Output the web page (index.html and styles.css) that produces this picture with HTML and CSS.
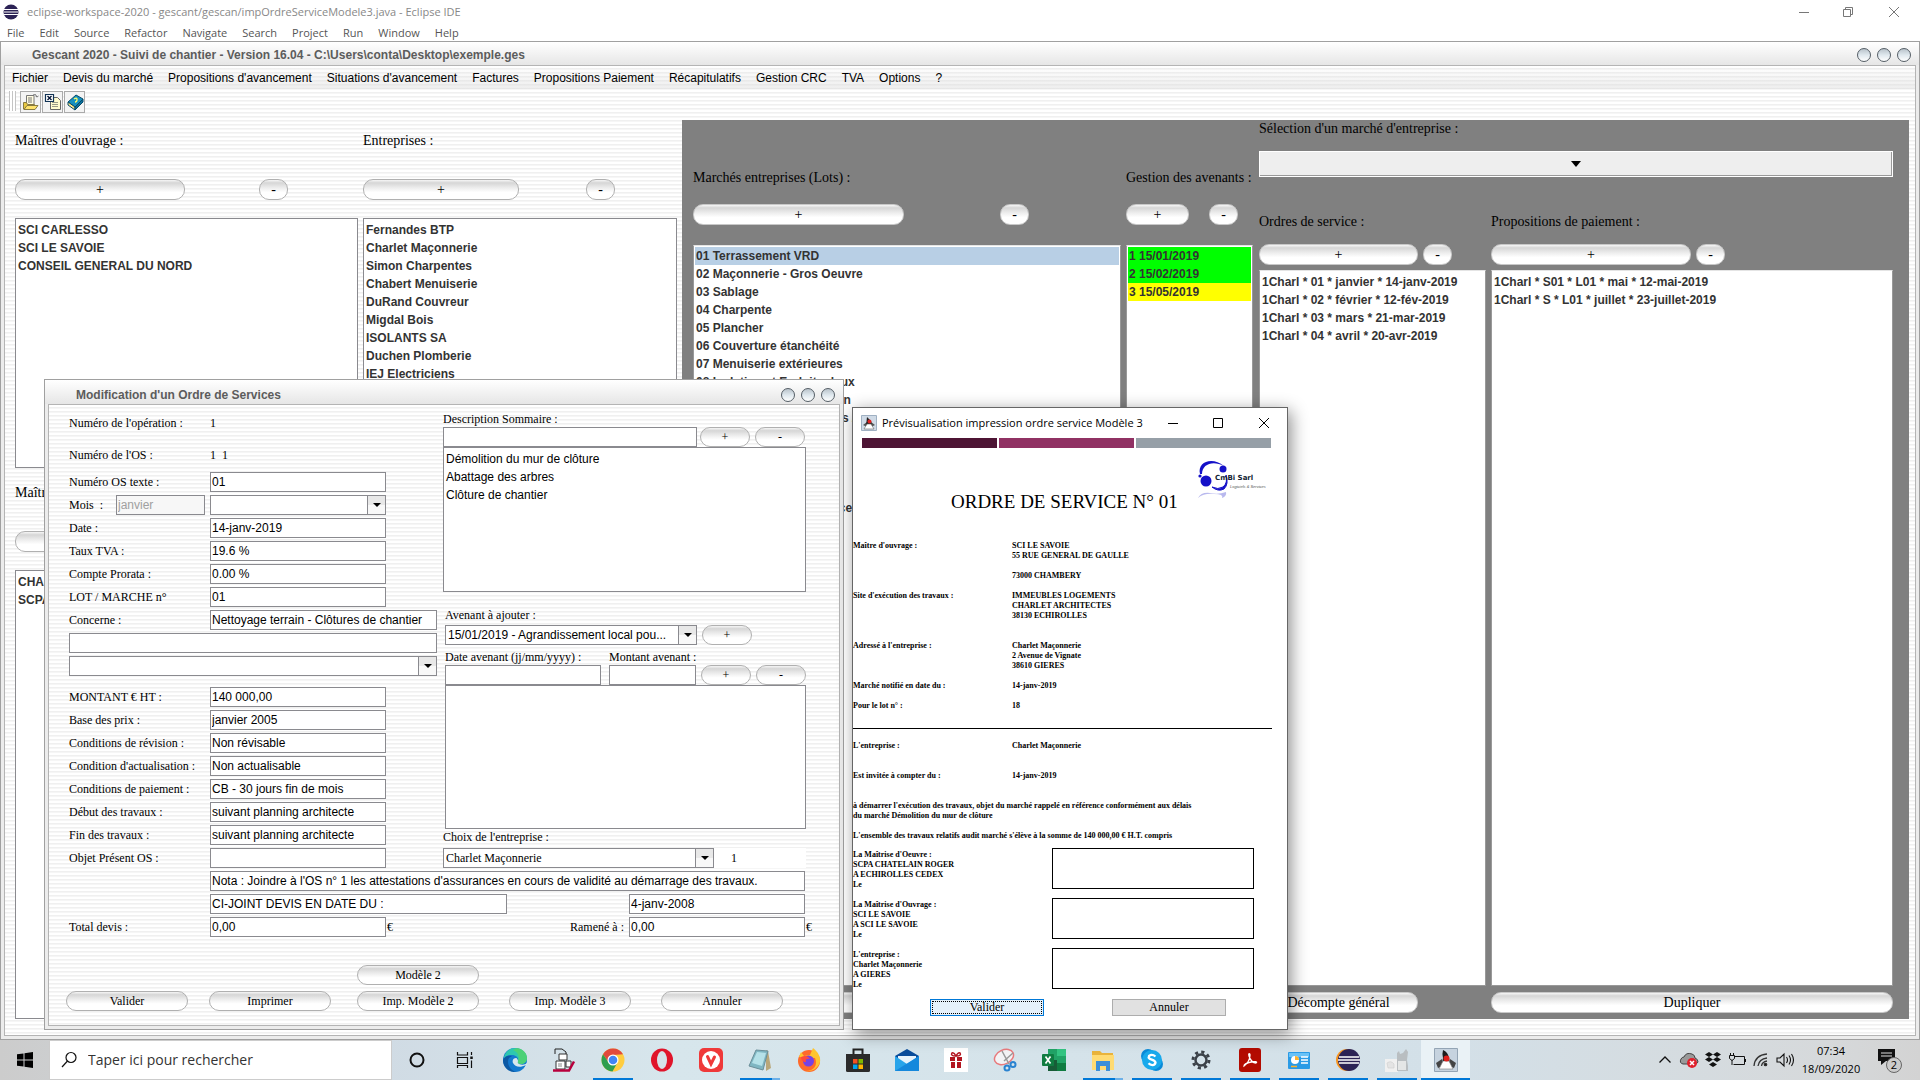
FILE: index.html
```html
<!DOCTYPE html>
<html lang="fr">
<head>
<meta charset="utf-8">
<title>Gescant 2020 - Suivi de chantier</title>
<link rel="stylesheet" href="styles.css">
</head>
<body>
<header class="ide">
  <div class="ide-title">
    <svg width="16" height="16" viewBox="0 0 16 16"><circle cx="8" cy="8" r="7.5" fill="#2c2255"/><path d="M1 5.500h14M1 8h14M1 10.500h14" stroke="#fff" stroke-width="1.200"/></svg>
    <span>eclipse-workspace-2020 - gescant/gescan/impOrdreServiceModele3.java - Eclipse IDE</span>
    <svg class="ide-controls" width="102" height="12" viewBox="0 0 102 12" fill="none" stroke="#777"><path d="M1 6.500h10M45.500 3.500h7v7h-7zM47.500 3.500v-2h7v7h-2M91 1l10 10M101 1L91 11"/></svg>
  </div>
  <nav class="ide-menu"><span>File</span><span>Edit</span><span>Source</span><span>Refactor</span><span>Navigate</span><span>Search</span><span>Project</span><span>Run</span><span>Window</span><span>Help</span></nav>
</header>

<main class="frame main-frame">
  <div class="frame-title"><span>Gescant 2020 - Suivi de chantier - Version 16.04 - C:\Users\conta\Desktop\exemple.ges</span><div class="orbs"><i></i><i></i><i></i></div></div>
  <div class="frame-body main-body">
    <nav class="menubar"><span>Fichier</span><span>Devis du marché</span><span>Propositions d'avancement</span><span>Situations d'avancement</span><span>Factures</span><span>Propositions Paiement</span><span>Récapitulatifs</span><span>Gestion CRC</span><span>TVA</span><span>Options</span><span>?</span></nav>
    <div class="toolbar">
      <span class="grip"></span>
      <button aria-label="Ouvrir"><svg width="18" height="18" viewBox="0 0 18 18"><path d="M4.500 11V2.500h7.500V11" fill="#fffbe0" stroke="#777"/><path d="M6 5h4M6 7h4M6 9h4" stroke="#777"/><path d="M1.500 16V9.500h3l1 2h7v4.500z" fill="#e8c840" stroke="#887a40"/><path d="M2 16.500l3-4h11l-3 4z" fill="#ffe36b" stroke="#887a40"/><path d="M11 2q3-2 4 2m0 0l-1.500-1m1.500 1l1.500-1" fill="none" stroke="#777"/></svg></button>
      <button aria-label="Exporter"><svg width="18" height="18" viewBox="0 0 18 18"><path d="M6.500 4.500h7l3 3v9h-10z" fill="#fffbd0" stroke="#666"/><path d="M8 9.500h6M8 11.500h6M8 13.500h6" stroke="#998"/><path d="M1.500 1.500h8v7h-8z" fill="#fff" stroke="#135" stroke-width="1.200"/><path d="M3.500 3l4 4M7.500 3l-4 4" stroke="#013" stroke-width="1.300"/></svg></button>
      <button aria-label="Aide"><svg width="18" height="18" viewBox="0 0 18 18"><path d="M2 9l8-7 7 4-8 8z" fill="#1590c0" stroke="#064a68"/><path d="M2 9v3l7 5v-3z" fill="#ffe88a" stroke="#064a68"/><path d="M9 14v3l8-8V6z" fill="#0b6f9b" stroke="#064a68"/><path d="M8 6q3-2 3 .5T9 9" stroke="#ff6" fill="none" stroke-width="1.300"/></svg></button>
    </div>
    <div class="workspace">
      <div class="stack">
        <section class="pane pane-top">
          <h2>Maîtres d'ouvrage :</h2>
          <div class="pair"><button class="pill w170">+</button><button class="pill w29 off74">-</button></div>
          <ul class="list"><li>SCI CARLESSO</li><li>SCI LE SAVOIE</li><li>CONSEIL GENERAL DU NORD</li></ul>
        </section>
        <section class="pane pane-bottom">
          <h2>Maîtres d'oeuvre :</h2>
          <div class="pair"><button class="pill w170">+</button><button class="pill w29 off74">-</button></div>
          <ul class="list"><li>CHARLET ARCHITECTES</li><li>SCPA CHATELAIN ROGER</li></ul>
        </section>
      </div>
      <section class="pane">
        <h2>Entreprises :</h2>
        <div class="pair"><button class="pill w156">+</button><button class="pill w29 off67">-</button></div>
        <ul class="list"><li>Fernandes BTP</li><li>Charlet Maçonnerie</li><li>Simon Charpentes</li><li>Chabert Menuiserie</li><li>DuRand Couvreur</li><li>Migdal Bois</li><li>ISOLANTS SA</li><li>Duchen Plomberie</li><li>IEJ Electriciens</li></ul>
      </section>
      <div class="contracts">
        <section class="lot">
          <h2>Marchés entreprises (Lots) :</h2>
          <div class="pair"><button class="pill w211">+</button><button class="pill w29 off96">-</button></div>
          <ul class="list"><li class="selected">01 Terrassement VRD</li><li>02 Maçonnerie - Gros Oeuvre</li><li>03 Sablage</li><li>04 Charpente</li><li>05 Plancher</li><li>06 Couverture étanchéité</li><li>07 Menuiserie extérieures</li><li>08 Isolation et Enduits deux</li><li>09 Menuiserie intérieure en</li><li>10 Carrelages Chapes sols /</li><li>11 Peinture</li><li>12 Electricité</li><li>13 Plomberie</li><li>14 Chauffage</li><li>15 Nettoyage de fin surface</li></ul>
          <button class="pill foot" aria-label="Situation"></button>
        </section>
        <section class="lot">
          <h2>Gestion des avenants :</h2>
          <div class="pair"><button class="pill w63">+</button><button class="pill w29 off20">-</button></div>
          <ul class="list"><li class="ok">1 15/01/2019</li><li class="ok">2 15/02/2019</li><li class="wait">3 15/05/2019</li></ul>
          <button class="pill foot" aria-label="Avenant"></button>
        </section>
        <div class="market">
          <h2><label for="market">Sélection d'un marché d'entreprise :</label></h2>
          <select id="market" class="market-select"><option></option></select>
          <div class="market-lists">
            <section class="orders">
              <h2>Ordres de service :</h2>
              <div class="pair"><button class="pill w159">+</button><button class="pill w29 off5">-</button></div>
              <ul class="list"><li>1Charl * 01 * janvier * 14-janv-2019</li><li>1Charl * 02 * février * 12-fév-2019</li><li>1Charl * 03 * mars * 21-mar-2019</li><li>1Charl * 04 * avril * 20-avr-2019</li></ul>
              <button class="pill foot w159">Décompte général</button>
            </section>
            <section class="orders">
              <h2>Propositions de paiement :</h2>
              <div class="pair"><button class="pill w200">+</button><button class="pill w29 off5">-</button></div>
              <ul class="list"><li>1Charl * S01 * L01 * mai * 12-mai-2019</li><li>1Charl * S * L01 * juillet * 23-juillet-2019</li></ul>
              <button class="pill foot">Dupliquer</button>
            </section>
          </div>
        </div>
      </div>
    </div>
  </div>
</main>

<form class="frame dialog" onsubmit="return false">
  <div class="frame-title"><span>Modification d'un Ordre de Services</span><div class="orbs"><i></i><i></i><i></i></div></div>
  <div class="frame-body dialog-body">
    <div class="cols">
      <div class="col-left">
        <div class="row"><span class="lab">Numéro de l'opération :</span><span>1</span></div>
        <div class="row row-os"><span class="lab">Numéro de l'OS :</span><span>1&nbsp; 1</span></div>
        <div class="row"><label class="lab" for="f1">Numéro OS texte :</label><input id="f1" class="w176" value="01"></div>
        <div class="row"><label class="lab-month" for="f2">Mois &nbsp;:</label><input id="f2" class="w89" value="janvier" disabled><select class="w176 month" aria-label="Mois"><option></option></select></div>
        <div class="row"><label class="lab" for="f3">Date :</label><input id="f3" class="w176" value="14-janv-2019"></div>
        <div class="row"><label class="lab" for="f4">Taux TVA :</label><input id="f4" class="w176" value="19.6 %"></div>
        <div class="row"><label class="lab" for="f5">Compte Prorata :</label><input id="f5" class="w176" value="0.00 %"></div>
        <div class="row"><label class="lab" for="f6">LOT / MARCHE n°</label><input id="f6" class="w176" value="01"></div>
        <div class="row"><label class="lab" for="f7">Concerne :</label><input id="f7" class="grow" value="Nettoyage terrain - Clôtures de chantier"></div>
        <div class="row"><input class="grow" aria-label="Concerne, suite"></div>
        <div class="row"><select class="grow" aria-label="Modèle de texte"><option></option></select></div>
        <div class="row row-amount"><label class="lab" for="g1">MONTANT € HT :</label><input id="g1" class="w176" value="140 000,00"></div>
        <div class="row"><label class="lab" for="g2">Base des prix :</label><input id="g2" class="w176" value="janvier 2005"></div>
        <div class="row"><label class="lab" for="g3">Conditions de révision :</label><input id="g3" class="w176" value="Non révisable"></div>
        <div class="row"><label class="lab" for="g4">Condition d'actualisation :</label><input id="g4" class="w176" value="Non actualisable"></div>
        <div class="row"><label class="lab" for="g5">Conditions de paiement :</label><input id="g5" class="w176" value="CB - 30 jours fin de mois"></div>
        <div class="row"><label class="lab" for="g6">Début des travaux :</label><input id="g6" class="w176" value="suivant planning architecte"></div>
        <div class="row"><label class="lab" for="g7">Fin des travaux :</label><input id="g7" class="w176" value="suivant planning architecte"></div>
        <div class="row"><label class="lab" for="g8">Objet Présent OS :</label><input id="g8" class="w176"></div>
      </div>
      <div class="col-right">
        <label class="cap" for="h1">Description Sommaire :</label>
        <div class="row"><input id="h1" class="w254"><button class="pill w50 gap3">+</button><button class="pill w50 gap5">-</button></div>
        <ul class="list plain"><li>Démolition du mur de clôture</li><li>Abattage des arbres</li><li>Clôture de chantier</li></ul>
        <label class="cap cap-add shift" for="h2">Avenant à ajouter :</label>
        <div class="row row-add shift"><select id="h2" class="w252"><option>15/01/2019 - Agrandissement local pou...</option></select><button class="pill w50 gap5">+</button></div>
        <div class="caps shift"><label class="cap w164" for="h3">Date avenant (jj/mm/yyyy) :</label><label class="cap" for="h4">Montant avenant :</label></div>
        <div class="row shift"><input id="h3" class="w156"><input id="h4" class="w87 gap8"><button class="pill w50 gap5">+</button><button class="pill w50 gap5">-</button></div>
        <ul class="list plain"></ul>
        <label class="cap" for="h5">Choix de l'entreprise :</label>
        <div class="row row-choice"><select id="h5" class="company"><option>Charlet Maçonnerie</option></select><span>1</span></div>
      </div>
    </div>
    <div class="lower">
      <div class="row indent"><input class="grow" aria-label="Nota" value="Nota : Joindre à l'OS n° 1 les attestations d'assurances en cours de validité au démarrage des travaux."></div>
      <div class="row indent"><input class="w297" aria-label="Devis" value="CI-JOINT DEVIS EN DATE DU :"><input class="w176 push" aria-label="Date du devis" value="4-janv-2008"></div>
      <div class="row"><label class="lab" for="t1">Total devis :</label><input id="t1" class="w176" value="0,00"><span class="euro">€</span><label class="push" for="t2">Ramené à :</label><input id="t2" class="w176 gap5" value="0,00"><span class="euro">€</span></div>
    </div>
    <div class="actions">
      <button class="pill third">Modèle 2</button>
      <button class="pill first">Valider</button><button class="pill">Imprimer</button><button class="pill">Imp. Modèle 2</button><button class="pill">Imp. Modèle 3</button><button class="pill">Annuler</button>
    </div>
  </div>
</form>

<section class="preview">
  <div class="preview-title">
    <svg width="16" height="16" viewBox="0 0 16 16"><path d="M.5.500h15v15H.5z" fill="#cfdae6" stroke="#9fb0c2"/><path d="M2 10l4-3v5zM14 10l-4-3v5z" fill="#555"/><path d="M6 2l4 4 1 5H5z" fill="#222"/><path d="M6 9h4l3 5H3z" fill="#fff" stroke="#666" stroke-width=".6"/><circle cx="8.500" cy="6.500" r="2" fill="#d22"/></svg>
    <span>Prévisualisation impression ordre service Modèle 3</span>
    <svg class="preview-controls" width="102" height="12" viewBox="0 0 102 12" fill="none" stroke="#000"><path d="M0 6.500h10M45.500 1.500h9v9h-9zM91 1l10 10M101 1L91 11"/></svg>
  </div>
  <div class="bars"><i class="plum"></i><i class="rose"></i><i class="slate"></i></div>
  <div class="sheet-head">
    <h1>ORDRE DE SERVICE N° 01</h1>
    <svg class="logo" width="70" height="40" viewBox="0 0 70 40"><path d="M2 14C-1 2 14-4 26 6C15 0 4 4 4 14z" fill="#1410c8"/><circle cx="25" cy="9" r="3.500" fill="#1410c8"/><circle cx="8" cy="21" r="5.500" fill="#1410c8"/><circle cx="2" cy="16" r="1.600" fill="#1410c8"/><path d="M28 15q2 8-3 12-5 3-11 0 6 5 12 2 5-5 2-14z" fill="#1410c8" stroke="#1410c8"/><path d="M0 38q3-6 12-5 8 2 16-1 1 4-4 6 2-4-8-4-10-1-16 4z" fill="#b9b9ee"/><text x="17" y="20" class="logo-name">CmBi Sarl</text><text x="32" y="28" class="logo-tag">Logiciels &amp; Services</text></svg>
  </div>
  <dl class="facts">
    <dt>Maître d'ouvrage :</dt><dd>SCI LE SAVOIE<br>55 RUE GENERAL DE GAULLE<br><br>73000 CHAMBERY</dd>
    <dt>Site d'exécution des travaux :</dt><dd class="wide">IMMEUBLES LOGEMENTS<br>CHARLET ARCHITECTES<br>38130 ECHIROLLES</dd>
    <dt>Adressé à l'entreprise :</dt><dd>Charlet Maçonnerie<br>2 Avenue de Vignate<br>38610 GIERES</dd>
    <dt>Marché notifié en date du :</dt><dd>14-janv-2019</dd>
    <dt>Pour le lot n° :</dt><dd>18</dd>
  </dl>
  <hr>
  <dl class="facts">
    <dt>L'entreprise :</dt><dd class="wide">Charlet Maçonnerie</dd>
    <dt>Est invitée à compter du :</dt><dd class="wide">14-janv-2019</dd>
  </dl>
  <p>à démarrer l'exécution des travaux, objet du marché rappelé en référence conformément aux délais<br>du marché Démolition du mur de clôture</p>
  <p>L'ensemble des travaux relatifs audit marché s'élève à la somme de 140 000,00 € H.T. compris</p>
  <div class="sign"><div>La Maîtrise d'Oeuvre :<br>SCPA CHATELAIN ROGER<br>A ECHIROLLES CEDEX<br>Le</div><i></i></div>
  <div class="sign"><div>La Maîtrise d'Ouvrage :<br>SCI LE SAVOIE<br>A SCI LE SAVOIE<br>Le</div><i></i></div>
  <div class="sign"><div>L'entreprise :<br>Charlet Maçonnerie<br>A GIERES<br>Le</div><i></i></div>
  <div class="preview-actions"><button class="focus"><span>Valider</span></button><button>Annuler</button></div>
</section>

<footer class="taskbar">
  <button class="start" aria-label="Démarrer"><svg width="16" height="16" viewBox="0 0 16 16"><path d="M0 2.300L6.500 1.400V7.500H0zM7.500 1.200L16 0v7.500H7.500zM0 8.500h6.500v6.100L0 13.700zM7.500 8.500H16V16l-8.500-1.200z"/></svg></button>
  <label class="search"><svg width="18" height="18" viewBox="0 0 18 18" fill="none" stroke="#111" stroke-width="1.200"><circle cx="11" cy="6.500" r="5"/><path d="M7.500 10L2 16"/></svg><input type="text" placeholder="Taper ici pour rechercher" aria-label="Rechercher"></label>
  <div class="apps">
    <button aria-label="Cortana"><svg width="24" height="24" viewBox="0 0 24 24"><circle cx="12" cy="12" r="6.500" fill="none" stroke="#111" stroke-width="2"/></svg></button>
    <button aria-label="Vue des tâches"><svg width="24" height="24" viewBox="0 0 24 24" fill="none" stroke="#111" stroke-width="1.200"><path d="M3.500 4v3h10V4M3.500 9.500h10v6h-10zM3.500 20v-2.500h10V20M17.500 4v3M17.500 12.500V20"/><path d="M17.500 8.500v2.500" stroke-width="2.500"/></svg></button>
    <button aria-label="Edge"><svg width="24" height="24" viewBox="0 0 24 24"><circle cx="12" cy="12" r="12" fill="#1479ce"/><path d="M1 9C3 2 8 0 12 0c7 0 12 5 12 10 0 4-3 6-6 6-3 0-4-1-3-3 1-4-3-6-6-6-4 0-7 1-8 5z" fill="#2ec7b0"/><path d="M14 0c6 1 10 5 10 10 0 4-3 6-6 6-3 0-4-1-3-3 2-4 0-9-5-11z" fill="#5ad65f" opacity=".7"/><path d="M6 10c-3 5 1 13 8 14-7 1-14-4-14-12 1-4 6-5 9-4z" fill="#0c59a4"/><path d="M13 10c-3 0-4 3-3 5 2 4 7 5 13 2-1 2-2 3-4 4 2-1 4-2 5-4V15c-2 2-5 2-8 1-2-1-1-2-1-3 0-1-1-3-2-3z" fill="#d7e6ec"/></svg></button>
    <button aria-label="Gescant"><svg width="24" height="24" viewBox="0 0 24 24"><path d="M7 6h8v6H7zM4 13h9v8H4zM14 13h5v6h-5z" fill="#fff" stroke="#333"/><path d="M3 1v5M3 1h7l4 3v2" fill="none" stroke="#222"/><path d="M1 22.500h16l5-9" fill="none" stroke="#b8003c" stroke-width="2.500"/><path d="M6 16h4M6 18h4" stroke="#888"/></svg></button>
    <button class="run" aria-label="Chrome"><svg width="24" height="24" viewBox="0 0 24 24"><circle cx="12" cy="12" r="11.500" fill="#ffcd40"/><path d="M2 6.300A11.500 11.500 0 0 1 22 6.300L12 7l-4 8z" fill="#e14a3c"/><path d="M2 6.300A11.500 11.500 0 0 0 11.500 23.500L16.500 14.500 8 15z" fill="#2f9e4f"/><circle cx="12" cy="12" r="5.500" fill="#fff"/><circle cx="12" cy="12" r="4.300" fill="#4285f4"/></svg></button>
    <button aria-label="Opera"><svg width="24" height="24" viewBox="0 0 24 24"><ellipse cx="12" cy="12" rx="11" ry="11.500" fill="#e0142a"/><ellipse cx="12" cy="12" rx="5" ry="9" fill="#d5e1e8"/></svg></button>
    <button aria-label="Vivaldi"><svg width="24" height="24" viewBox="0 0 24 24"><rect width="24" height="24" rx="5" fill="#ef3939"/><circle cx="12" cy="12" r="9" fill="#fff"/><path d="M8.500 8.500l3.500 7.500 3.500-7" fill="none" stroke="#ef3939" stroke-width="3" stroke-linecap="round"/></svg></button>
    <button class="run more" aria-label="Bloc-notes"><svg width="24" height="24" viewBox="0 0 24 24"><path d="M18 2l2 1 3 17-5 3z" fill="#b9a77a"/><path d="M8 2l12 1-5 19-14-4z" fill="#7fb6c2" stroke="#6a8e98"/><path d="M9 4l9 1-4 13-10-3z" fill="#b5e1e8"/></svg></button>
    <button aria-label="Firefox"><svg width="24" height="24" viewBox="0 0 24 24"><circle cx="12" cy="13" r="11" fill="#ff6a2b"/><path d="M2 9l2-5 3 4 6-1 3-7c5 4 8 9 7 14-2 7-9 10-14 9 8 0 12-6 9-13z" fill="#ffc42e"/><circle cx="11.500" cy="13" r="5.500" fill="#7542e5"/><path d="M4 9c4-2 7-1 9 2-3-1-5 0-4 3-3 0-5-2-5-5z" fill="#ff4a3c"/></svg></button>
    <button aria-label="Store"><svg width="24" height="24" viewBox="0 0 24 24"><path d="M7.500 7V1.500h9V7" fill="none" stroke="#222" stroke-width="2"/><path d="M0 6h24v16.500q0 1.500-1.500 1.500h-21Q0 24 0 22.500z" fill="#2b2b2b"/><path d="M7 11h4.500v4.500H7z" fill="#f25022"/><path d="M12.500 11H17v4.500h-4.500z" fill="#7fba00"/><path d="M7 16.500h4.500V21H7z" fill="#00a4ef"/><path d="M12.500 16.500H17V21h-4.500z" fill="#ffb900"/></svg></button>
    <button aria-label="Courrier"><svg width="24" height="24" viewBox="0 0 24 24"><path d="M0 8l12-7 12 7v6H0z" fill="#0a4c9a"/><path d="M3 8h18v9H3z" fill="#e8f3fb"/><path d="M0 8l12 8 12-8v15H0z" fill="#28a4ea"/><path d="M24 8v15H0z" fill="#1588dc"/></svg></button>
    <button aria-label="Cadeaux"><svg width="24" height="24" viewBox="0 0 24 24"><path d="M0 0h24v24H0z" fill="#fff"/><path d="M6 9h5v4H6zM13 9h5v4h-5zM7 14h4v6H7zM13 14h4v6h-4z" fill="#b21520"/><path d="M12 8Q6 8 8 5q2-1 4 3 2-4 4-3 2 3-4 3z" fill="none" stroke="#b21520" stroke-width="1.500"/></svg></button>
    <button aria-label="Capture"><svg width="24" height="24" viewBox="0 0 24 24"><ellipse cx="11" cy="9" rx="10" ry="7" transform="rotate(-25 11 9)" fill="#f3f3f5" stroke="#e87a7d" stroke-width="1.500"/><path d="M9 3l7 13M20 5l-9 8" stroke="#999" stroke-width="1.500"/><circle cx="14" cy="20" r="2.500" fill="none" stroke="#2a83d0" stroke-width="2"/><circle cx="20" cy="16.500" r="2.500" fill="none" stroke="#2a83d0" stroke-width="2"/></svg></button>
    <button aria-label="Excel"><svg width="24" height="24" viewBox="0 0 24 24"><path d="M6 1h18v22H6z" fill="#21a366"/><path d="M15 1h9v7h-9z" fill="#33c481"/><path d="M6 12h9v11H6z" fill="#185c37"/><path d="M15 15h9v8h-9z" fill="#107c41"/><rect y="6" width="12" height="12" rx="1" fill="#107c41"/><path d="M3.500 8.500l5 7M8.500 8.500l-5 7" stroke="#fff" stroke-width="1.700"/></svg></button>
    <button class="run more" aria-label="Explorateur"><svg width="24" height="24" viewBox="0 0 24 24"><path d="M1 3h8l2 2h11v17H1z" fill="#e9b33b"/><path d="M1 7h22v15H1z" fill="#ffdb73"/><path d="M5 23V13h14v10h-4v-5H9v5z" fill="#3b8fd9"/></svg></button>
    <button class="run" aria-label="Skype"><svg width="24" height="24" viewBox="0 0 24 24"><circle cx="8" cy="8" r="7" fill="#0a8ad8"/><circle cx="16" cy="16" r="7" fill="#0a8ad8"/><circle cx="12" cy="12" r="10" fill="#18a9ec"/><path d="M15.500 8.500Q12 5.500 9 8c-2 4 6 3 6.500 6.500-.5 3.500-5 3-7 .8" fill="none" stroke="#fff" stroke-width="2.300"/></svg></button>
    <button class="run" aria-label="Paramètres"><svg width="24" height="24" viewBox="0 0 24 24" fill="none" stroke="#3b4148"><circle cx="12" cy="12" r="5.500" stroke-width="2.500"/><circle cx="12" cy="12" r="8" stroke-width="3" stroke-dasharray="3.140 3.140"/></svg></button>
    <button class="run" aria-label="Acrobat"><svg width="24" height="24" viewBox="0 0 24 24"><rect x="1" y="0" width="22" height="24" rx="3" fill="#b30b00"/><path d="M6 18c4-3 6-7 6-11 0-2-2-2-1 1 1 4 4 7 7 7 2-1-1-2-5-1-4 1-7 2-7 4z" fill="none" stroke="#fff" stroke-width="1.300"/></svg></button>
    <button class="run" aria-label="Panneau de configuration"><svg width="24" height="24" viewBox="0 0 24 24"><rect x="1" y="4" width="22" height="17" rx="1" fill="#2a9be6"/><path d="M2 5h20v4H2z" fill="#69c2f7"/><circle cx="8" cy="12" r="4" fill="#fff"/><path d="M8 12V8a4 4 0 0 1 4 4z" fill="#ffb22e"/><path d="M14 9h7M14 12h7M14 15h7" stroke="#fff" stroke-width="1.500"/><path d="M4 18.500h6" stroke="#ffb22e" stroke-width="1.500"/></svg></button>
    <button class="run" aria-label="Eclipse"><svg width="24" height="24" viewBox="0 0 24 24"><circle cx="11" cy="12" r="11" fill="#f7941e"/><circle cx="13" cy="12" r="11" fill="#2c2255"/><path d="M3 9h20M2 12h22M3 15h20" stroke="#fff" stroke-width="1.500"/></svg></button>
    <button class="run" aria-label="Application"><svg width="24" height="24" viewBox="0 0 24 24"><path d="M0 11h13v13H0z" fill="#f0f0f0"/><path d="M12 5l2-2 1 3 3-1 3-4 2 3-1 8 1 6v5H12z" fill="#b9bec1"/><path d="M13 13h8v9h-8z" fill="#e4e6e6"/><path d="M2 15q4-3 7 1v4H3z" fill="#e4e4e4" stroke="#ccc" stroke-width=".6"/></svg></button>
    <button class="run active" aria-label="Java"><svg width="24" height="24" viewBox="0 0 24 24"><path d="M.5.500h23v23H.5z" fill="#c6d3df" stroke="#94a5b5"/><path d="M2 15l6-4 1 7-5 2zM22 15l-6-4-1 7 5 2z" fill="#444"/><path d="M9 2q5 2 6 8l1 6H8l1-6q-1-5 0-8z" fill="#1c1c1c"/><path d="M9 13h6l4 8H5z" fill="#fff" stroke="#777" stroke-width=".6"/><circle cx="12.500" cy="10.500" r="3" fill="#e0201c"/></svg></button>
  </div>
  <div class="tray">
    <svg width="24" height="24" viewBox="0 0 24 24" fill="none" stroke="#111" stroke-width="1.300"><path d="M6.500 14.500l5.500-5.500 5.500 5.500"/></svg>
    <svg width="24" height="24" viewBox="0 0 24 24"><path d="M6 16q-4-1-2-5 1-2 3-2 2-5 8-3 3 1 3 4 3 1 3 4-1 2-3 2z" fill="#999" stroke="#444"/><circle cx="15" cy="15" r="5" fill="#e0202c"/><path d="M13 13l4 4M17 13l-4 4" stroke="#fff" stroke-width="1.500"/></svg>
    <svg width="24" height="24" viewBox="0 0 24 24"><path d="M8 4l4 2.500L8 9 4 6.500zM16 4l4 2.500L16 9l-4-2.500zM8 9l4 2.500L8 14l-4-2.500zM16 9l4 2.500-4 2.500-4-2.500zM12 14l4 2.500-4 2.500-4-2.500z" fill="#111"/></svg>
    <svg width="24" height="24" viewBox="0 0 24 24" fill="none" stroke="#111"><path d="M10 8.500h9.500v8h-11M20.500 11v3M5.500 5v2M8.500 5v2M4.500 7.500h5v3l-2.500 2-2.500-2zM7 12v5"/></svg>
    <svg width="24" height="24" viewBox="0 0 24 24" fill="none" stroke="#333" stroke-width="1.300"><path d="M5 18Q6 7 18 6M9 18q1-7 9-8M12.500 18q.5-4 5.500-5"/><circle cx="16.500" cy="16.500" r="1.200" fill="#111"/></svg>
    <svg width="24" height="24" viewBox="0 0 24 24" fill="none" stroke="#111" stroke-width="1.100"><path d="M4 10h3l4-4v12l-4-4H4zM13.500 9q2 3 0 6M16 7.500q3 4.500 0 9M18.500 6q4 6 0 12"/></svg>
    <div class="clock"><span>07:34</span><span>18/09/2020</span></div>
    <svg class="notice" width="30" height="30" viewBox="0 0 30 30"><path d="M4 4h17v12h-9l-5 4v-4H4z" fill="#111"/><path d="M7 8h11M7 11h11" stroke="#ddd"/><circle cx="20" cy="20" r="7.500" fill="#ccc" stroke="#666"/><text x="20" y="24" text-anchor="middle">2</text></svg>
  </div>
</footer>
</body>
</html>
```
FILE: styles.css
```css
* { box-sizing: border-box; }
body {
  margin: 0;
  min-height: 100vh;
  position: relative;
  display: flex;
  flex-direction: column;
  background: #fff;
  color: #000;
  font: 12px/16px "Liberation Sans", Arial, sans-serif;
  overflow-x: hidden;
}
button, input, select { font: inherit; color: inherit; margin: 0; }
h1, h2, ul, dl, dd, p { margin: 0; padding: 0; }
h1, h2 { font-weight: normal; }
ul { list-style: none; }

/* Eclipse header */
.ide { height: 41px; font-family: "Open Sans", "Noto Sans", sans-serif; font-size: 11px; }
.ide-title { display: flex; align-items: center; gap: 8px; height: 24px; padding: 0 20px 0 3px; color: #888; }
.ide-controls { margin-left: auto; }
.ide-menu { display: flex; gap: 15px; padding-left: 7px; line-height: 17px; color: #555; }

/* Swing internal frames */
.frame { border: 1px solid #a0a0a0; padding: 0 3px 3px; background: #ececec; display: flex; flex-direction: column; }
.frame-title {
  display: flex; align-items: center; justify-content: space-between;
  height: 24px; margin: 0 -3px; padding: 3px 8px 0 31px;
  background: linear-gradient(#fff, #e6e6e6);
  color: #5c5c5c; font-weight: bold;
}
.main-frame > .frame-title { height: 23px; padding-top: 2px; }
.orbs { display: flex; gap: 6px; }
.orbs i { width: 14px; height: 14px; border: 1px solid #555e66; border-radius: 50%; background: linear-gradient(#b9c3cb, #dfe8ee 50%, #fff); }
.frame-body {
  flex: 1; border: 1px solid #b4b4b4;
  background: repeating-linear-gradient(#fff 0 2px, #f0f0f0 2px 3px, #f6f6f6 3px 4px);
}
.main-frame { flex: 1; }
.main-body { display: flex; flex-direction: column; padding-bottom: 16px; }
.menubar { display: flex; gap: 15px; height: 23px; padding-left: 7px; line-height: 24px; background: linear-gradient(rgba(255,255,255,0), rgba(220,220,220,.5)); }
.toolbar { display: flex; gap: 1px; height: 31px; padding: 2px 0 0 4px; }
.grip { width: 7px; height: 20px; margin-right: 3px; background: repeating-linear-gradient(90deg, #c4c4c4 0 1px, #fff 1px 3px); }
.toolbar button { display: flex; align-items: center; justify-content: center; width: 21px; height: 22px; padding: 0; border: 1px solid #aaa; background: #f4f4f4; }

.pill {
  height: 21px; padding: 0; flex: none;
  border: 1px solid #b0b0b0; border-radius: 10px;
  background: linear-gradient(#f6f6f6 0, #d6d6d6 15%, #ececec 40%, #fff 65%, #fff);
  font: 14px/18px "Liberation Serif", "Times New Roman", serif;
  text-align: center;
}
.pair { display: flex; }
h2 { font: 14px/18px "Liberation Serif", "Times New Roman", serif; white-space: nowrap; }
.list { border: 1px solid #8a8a8f; background: #fff; padding: 2px 1px; font-weight: bold; color: #333; overflow: hidden; }
.list li { height: 18px; padding-left: 1px; line-height: 19px; white-space: nowrap; }
.list .selected { background: #b8cfe5; }
.list .ok { background: #0f0; }
.list .wait { background: #ff0; }

.w29 { width: 29px; } .w50 { width: 50px; } .w63 { width: 63px; }
.w87 { width: 87px; } .w89 { width: 89px; } .w156 { width: 156px; }
.w159 { width: 159px; } .w164 { width: 164px; } .w170 { width: 170px; }
.w176 { width: 176px; } .w200 { width: 200px; } .w211 { width: 211px; }
.w252 { width: 252px; } .w254 { width: 254px; } .w297 { width: 297px; }
.off5 { margin-left: 5px; } .off20 { margin-left: 20px; } .off67 { margin-left: 67px; }
.off74 { margin-left: 74px; } .off96 { margin-left: 96px; }
.gap3 { margin-left: 3px; } .gap5 { margin-left: 5px; } .gap8 { margin-left: 8px; }
.grow { flex: 1; min-width: 0; }
.push { margin-left: auto; }

.workspace {
  flex: 1; display: grid; gap: 5px; padding: 0 6px 0 10px;
  grid-template-columns: minmax(0, 343fr) minmax(0, 314fr) minmax(0, 1227fr);
}
.stack { display: flex; flex-direction: column; }
.pane { display: flex; flex-direction: column; padding-top: 12px; }
.pane .pair { margin: 29px 0 18px; }
.pane .list { flex: 1; }
.pane-top { flex: 346 0 0; }
.pane-bottom { flex: 552 0 0; padding-top: 16px; }
.contracts {
  display: grid; gap: 5px; padding: 0 16px 6px 11px; background: #808080;
  grid-template-columns: minmax(0, 428fr) minmax(0, 127fr) minmax(0, 635fr);
}
.contracts .pill { border-color: #c8c8c8; }
.contracts .list { border-color: #e4e4e4 #999 #999 #999; padding: 1px 1px 0; flex: 1; }
.lot { display: flex; flex-direction: column; padding-top: 49px; }
.lot .pair { margin: 17px 0 20px; }
.foot { margin-top: 6px; }
.market { display: flex; flex-direction: column; padding-left: 1px; }
.market-select {
  appearance: none; width: 100%; height: 26px; margin: 13px 0 36px;
  border: 1px solid #fff; border-radius: 0; box-shadow: inset -1px -1px #999;
  background: #eee url("data:image/svg+xml,%3Csvg xmlns='http://www.w3.org/2000/svg' width='10' height='6'%3E%3Cpath d='M0 0h10L5 6z'/%3E%3C/svg%3E") no-repeat center;
}
.market-lists { flex: 1; display: grid; gap: 5px; grid-template-columns: minmax(0, 227fr) minmax(0, 402fr); }
.orders { display: flex; flex-direction: column; }
.orders .pair { margin: 13px 0 5px; }
.orders .list { padding-top: 2px; }

/* Service order dialog */
.dialog { position: absolute; left: 44px; top: 379px; width: 800px; height: 651px; font: 12px/20px "Liberation Serif", "Times New Roman", serif; }
.frame-title { font-family: "Liberation Sans", Arial, sans-serif; }
.dialog .frame-title { padding-top: 5px; }
.dialog-body { padding: 8px 25px 0 20px; }
.cols { display: grid; grid-template-columns: 368px 363px; gap: 6px; }
.col-left { display: flex; flex-direction: column; gap: 3px; }
.row { display: flex; height: 20px; align-items: center; white-space: nowrap; }
.row-os { margin: 9px 0 4px; }
.row-amount { margin-top: 8px; }
.lab { width: 141px; flex: none; }
.lab-month { width: 47px; flex: none; }
.month { margin-left: 5px; }
.row input, .row select { height: 20px; padding: 0 1px; border: 1px solid #8a8a8f; border-radius: 0; background: #fff; font: 12px/18px "Liberation Sans", Arial, sans-serif; }
.row input:disabled { background: #f7f7f7; color: #a0a0a0; }
.row select {
  appearance: none; padding-left: 2px;
  background: #fff url("data:image/svg+xml,%3Csvg xmlns='http://www.w3.org/2000/svg' width='18' height='18'%3E%3Cpath fill='%23e8e8e8' d='M0 0h18v18H0z'/%3E%3Cpath fill='%23f8f8f8' d='M0 9h18v9H0z'/%3E%3Cpath fill='%238a8a8f' d='M0 0h1v18H0z'/%3E%3Cpath d='M6 7h8l-4 4z'/%3E%3C/svg%3E") no-repeat right center;
}
.col-right { display: flex; flex-direction: column; margin-top: -2px; }
.cap { line-height: 16px; }
.caps { display: flex; margin-top: 4px; }
.cap-add { margin-top: 15px; }
.row-add { margin-top: 2px; }
.shift { margin-left: 2px; }
.dialog .pill { font-size: 12px; height: 20px; line-height: 16px; }
.list.plain { height: 145px; font: 12px/18px "Liberation Sans", Arial, sans-serif; color: #000; }
.list.plain:empty { height: 144px; margin-left: 2px; }
.row-choice { margin-top: 3px; background: #fff; }
.row .company { width: 271px; margin-right: 17px; font-family: "Liberation Serif", "Times New Roman", serif; }
.lower { display: flex; flex-direction: column; gap: 3px; margin-top: 3px; width: 744px; }
.indent { padding: 0 8px 0 141px; }
.euro { width: 8px; padding-left: 1px; }
.actions { display: grid; gap: 6px 0; grid-template-columns: 143px 148px 152px 152px 122px; margin: 28px 0 0 -3px; }
.actions .pill { width: 122px; }
.third { grid-column: 3; }
.first { grid-column: 1; }

/* Print preview window */
.preview { position: absolute; left: 852px; top: 407px; width: 436px; height: 623px; border: 1px solid #666; background: #fff; box-shadow: 3px 4px 16px rgba(0,0,0,.45); font: bold 8px/10px "Liberation Serif", "Times New Roman", serif; }
.preview-title { display: flex; align-items: center; gap: 5px; height: 30px; padding: 0 17px 0 8px; font: 11px/16px "Open Sans", "Noto Sans", sans-serif; }
.preview-controls { margin-left: auto; }
.bars { display: flex; gap: 2px; height: 10px; margin: 0 16px 0 9px; }
.bars i { flex: 1; }
.plum { background: #4d1434; } .rose { background: #903163; } .slate { background: #969fa7; }
.sheet-head { display: flex; justify-content: space-between; height: 93px; padding: 12px 19px 0 98px; }
.sheet-head h1 { font-size: 19px; line-height: 24px; padding-top: 30px; white-space: nowrap; }
.logo { overflow: visible; }
.logo-name { font: bold 7px "DejaVu Sans", sans-serif; fill: #123; }
.logo-tag { font: italic 4px "Liberation Sans", sans-serif; fill: #555; }
.facts { display: grid; grid-template-columns: 159px 1fr; white-space: nowrap; }
.facts dd { padding-bottom: 10px; }
.facts .wide { padding-bottom: 20px; }
.preview hr { height: 1px; margin: 7px 15px 12px 0; border: 0; background: #000; }
.preview p { margin-bottom: 10px; white-space: nowrap; }
.sign { display: grid; grid-template-columns: 199px 202px; height: 41px; margin: -3px 0 12px; }
.sign div { height: 41px; padding-top: 2px; }
.sign i { height: 41px; border: 1px solid #000; }
.preview-actions { display: flex; gap: 68px; padding-left: 77px; margin-top: -2px; }
.preview-actions button { width: 114px; height: 17px; padding: 0; border: 1px solid #adadad; background: #e1e1e1; font: 12px/13px "Liberation Serif", "Times New Roman", serif; }
.preview-actions .focus { border-color: #0078d7; background: #e5f1fb; }
.focus span { display: block; height: 13px; margin: 0 1px; outline: 1px dotted #000; outline-offset: -1px; }

/* Windows taskbar */
.taskbar { display: flex; height: 40px; background: linear-gradient(90deg, #ccc 0, #d0dbe4 20%, #d7e6ec 35%, #d3e0e8 75%, #d6d9db 95%, #d3d3d3); font-family: "Open Sans", "Noto Sans", sans-serif; }
.taskbar button { display: flex; align-items: center; justify-content: center; border: 0; padding: 0; background: none; }
.start { width: 49px; }
.search { display: flex; align-items: center; gap: 10px; width: 343px; padding-left: 10px; border: 1px solid #ccc; background: #fff; }
.search input { flex: 1; min-width: 0; border: 0; padding: 0; background: none; font-size: 14px; }
.search input::placeholder { color: #333; opacity: 1; }
.apps { display: flex; }
.apps button { width: 49px; }
.apps .run { background: linear-gradient(#0078d7, #0078d7) no-repeat center bottom / 40px 2px; }
.apps .more { background: linear-gradient(90deg, #0078d7 80%, #6cb0e8 80%) no-repeat center bottom / 40px 2px; }
.apps .active { background: linear-gradient(#0078d7, #0078d7) no-repeat center bottom / 49px 2px, #eaf2f6; }
.tray { display: flex; align-items: center; margin-left: auto; padding-right: 16px; }
.clock { display: flex; flex-direction: column; align-items: center; width: 68px; line-height: 18px; font-size: 11px; }
.notice { margin-left: 9px; }
.notice text { font-size: 11px; }
```
